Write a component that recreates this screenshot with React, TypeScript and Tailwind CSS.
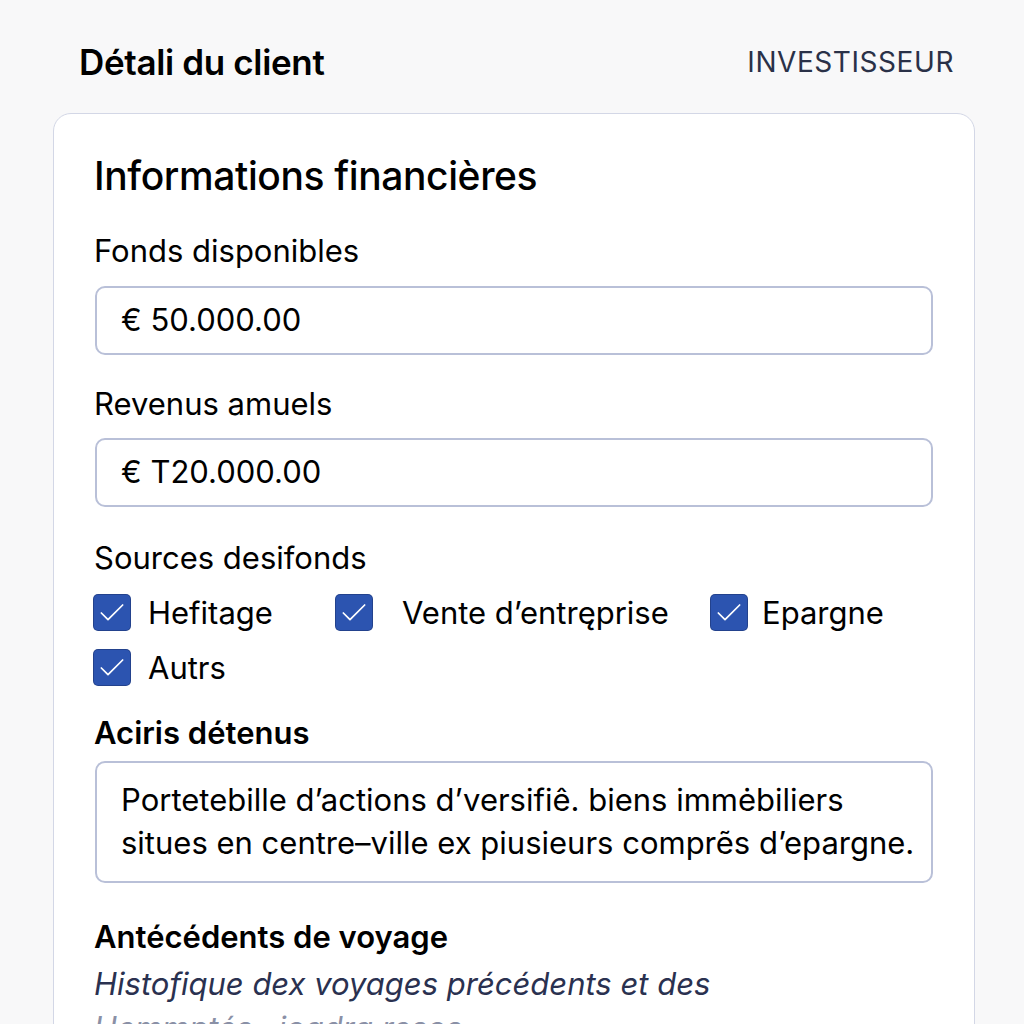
import { Check } from 'lucide-react';

const sources = [
  { label: 'Hefitage', className: 'w-[242px] gap-[18px]' },
  { label: 'Vente d’entręprise', className: 'w-[375px] gap-[30px]' },
  { label: 'Epargne', className: 'gap-[15px]' },
];

function CheckItem({ label, className = '' }: { label: string; className?: string }) {
  return (
    <label className={`flex h-[35px] items-center ${className}`}>
      <span className="flex h-[35px] w-[36px] shrink-0 items-center justify-center rounded-[4px] bg-[#2c54b0] shadow-[0_0_0_1px_#23428d]">
        <Check size={32} strokeWidth={1.3} className="text-white" />
      </span>
      <span className="text-[31px] leading-[35px] text-black">{label}</span>
    </label>
  );
}

export default function App() {
  return (
    <div className="h-[1024px] overflow-hidden bg-[#f8f8f9] font-['Inter',sans-serif]">
      <div className="flex items-center justify-between pl-[79px] pr-[70px] pt-[40px]">
        <h1 className="text-[35px] font-semibold leading-[44px] tracking-[-0.01em] text-black">Détali du client</h1>
        <span className="text-[28px] tracking-[0.02em] text-[#2a3148]">INVESTISSEUR</span>
      </div>

      <div className="ml-[53px] mr-[49px] mt-[29px] rounded-[18px] border border-[#d3d7e6] bg-white pb-10 pl-[40px] pr-[41px] pt-[38px]">
        <h2 className="text-[39px] font-medium leading-[48px] tracking-[-0.01em] text-black">Informations financières</h2>

        <p className="mt-[31px] text-[31px] leading-[40px] text-black">Fonds disponibles</p>
        <div className="ml-[1px] mt-[15px] flex h-[69px] items-center rounded-[10px] border-2 border-[#b9c0d8] px-[24px] text-[31px] text-black">
          € 50.000.00
        </div>

        <p className="mt-[29px] text-[31px] leading-[40px] text-black">Revenus amuels</p>
        <div className="ml-[1px] mt-[14px] flex h-[69px] items-center rounded-[10px] border-2 border-[#b9c0d8] px-[24px] text-[31px] text-black">
          € T20.000.00
        </div>

        <p className="mt-[31px] text-[31px] leading-[40px] text-black">Sources desifonds</p>
        <div className="mt-[17px] flex flex-col gap-[20px]">
          <div className="flex">
            {sources.map((s) => (
              <CheckItem key={s.label} label={s.label} className={s.className} />
            ))}
          </div>
          <CheckItem label="Autrs" className="gap-[18px]" />
        </div>

        <p className="mt-[28px] text-[31px] font-semibold leading-[40px] text-black">Aciris détenus</p>
        <div className="ml-[1px] mt-[8px] whitespace-nowrap rounded-[10px] border-2 border-[#b9c0d8] pb-[17px] pl-[24px] pr-[12px] pt-[15px] text-[31px] leading-[43px] text-black">
          Portetebille d’actions d’versifiê. biens immėbiliers
          <br />
          situes en centre–ville ex piusieurs comprẽs d’epargne.
        </div>

        <p className="mt-[34px] text-[31px] font-semibold leading-[40px] text-black">Antécédents de voyage</p>
        <p className="mt-[5px] text-[31px] italic leading-[44px] text-[#2a3150]">
          Histofique dex voyages précédents et des
          <br />
          <span className="text-[#8a90a6]">Hemmptés · joadra resos</span>
        </p>
      </div>
    </div>
  );
}
